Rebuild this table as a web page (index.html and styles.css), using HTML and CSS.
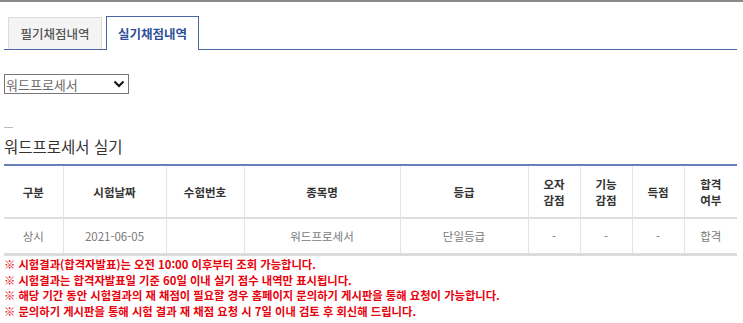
FILE: index.html
```html
<!DOCTYPE html>
<html lang="ko">

<head>
  <meta charset="UTF-8">
  <meta name="viewport" content="width=device-width, initial-scale=1.0">
  <title>채점내역 조회</title>
  <link rel="stylesheet" href="styles.css">
</head>

<body>
  <div class="wrap">
    <ul class="tabs">
      <li class="tab">필기채점내역</li>
      <li class="tab on">실기채점내역</li>
    </ul>

    <div class="select-box">
      <select class="subject">
        <option>워드프로세서</option>
      </select>
      <svg class="arrow" width="12" height="8" viewBox="0 0 12 8">
        <path d="M1.5 1.5 L6 6 L10.5 1.5" fill="none" stroke="#111" stroke-width="2"/>
      </svg>
    </div>

    <div class="dash"></div>
    <h3 class="title">워드프로세서 실기</h3>

    <table class="score">
      <colgroup>
        <col style="width:59px">
        <col style="width:103px">
        <col style="width:78px">
        <col style="width:156px">
        <col style="width:128px">
        <col style="width:52px">
        <col style="width:52px">
        <col style="width:52px">
        <col style="width:53px">
      </colgroup>
      <thead>
        <tr>
          <th>구분</th>
          <th>시험날짜</th>
          <th>수험번호</th>
          <th>종목명</th>
          <th>등급</th>
          <th>오자<br>감점</th>
          <th>기능<br>감점</th>
          <th>득점</th>
          <th>합격<br>여부</th>
        </tr>
      </thead>
      <tbody>
        <tr>
          <td>상시</td>
          <td>2021-06-05</td>
          <td></td>
          <td>워드프로세서</td>
          <td>단일등급</td>
          <td>-</td>
          <td>-</td>
          <td>-</td>
          <td>합격</td>
        </tr>
      </tbody>
    </table>

    <ul class="notice">
      <li>※ 시험결과(합격자발표)는 오전 10:00 이후부터 조회 가능합니다.</li>
      <li>※ 시험결과는 합격자발표일 기준 60일 이내 실기 점수 내역만 표시됩니다.</li>
      <li>※ 해당 기간 동안 시험결과의 재 채점이 필요할 경우 홈페이지 문의하기 게시판을 통해 요청이 가능합니다.</li>
      <li>※ 문의하기 게시판을 통해 시험 결과 재 채점 요청 시 7일 이내 검토 후 회신해 드립니다.</li>
    </ul>
  </div>
</body>

</html>
```

FILE: styles.css
```css
body {
  margin: 0;
  font-family: "Noto Sans CJK KR", "Noto Sans", sans-serif;
  background-color: #fff;
  color: #333;
}

.wrap {
  border-top: 2px solid #8a8a8a;
  padding: 0 6px 0 4px;
}

/* 탭 */
.tabs {
  display: flex;
  align-items: flex-end;
  list-style: none;
  margin: 14px 0 0;
  padding: 0;
  border-bottom: 1px solid #4a64a8;
  height: 33px;
}

.tab {
  box-sizing: border-box;
  width: 94px;
  height: 32px;
  margin-left: 4px;
  border: 1px solid #dcdcdc;
  border-bottom: none;
  background-color: #f4f4f4;
  color: #555;
  font-size: 12.5px;
  font-weight: 500;
  line-height: 31px;
  text-align: center;
}

.tab.on {
  width: 93px;
  height: 34px;
  margin-bottom: -1px;
  border: 1px solid #4a64a8;
  border-bottom: none;
  background-color: #fff;
  color: #2e4f9a;
  font-weight: 700;
  line-height: 34px;
}

/* 종목 선택 */
.select-box {
  position: relative;
  width: 125px;
  margin-top: 24px;
}

.subject {
  display: block;
  width: 125px;
  height: 20px;
  margin: 0;
  padding: 0 1px;
  border: 1px solid #777;
  border-radius: 0;
  background-color: #fff;
  color: #6a6a6a;
  font-family: inherit;
  font-size: 13px;
  appearance: none;
  -webkit-appearance: none;
}

.arrow {
  position: absolute;
  right: 4px;
  top: 6px;
  pointer-events: none;
}

.dash {
  width: 9px;
  height: 1px;
  margin-top: 33px;
  background-color: #bbb;
}

.title {
  margin: 8px 0 0;
  font-size: 15.5px;
  font-weight: 400;
  line-height: 20px;
  color: #333;
}

/* 점수 표 */
.score {
  width: 733px;
  margin-top: 8px;
  border-collapse: collapse;
  table-layout: fixed;
  border-top: 2px solid #6a80bb;
  border-bottom: 3px solid #dcdcdc;
}

.score th,
.score td {
  padding: 0;
  text-align: center;
  font-size: 11.5px;
  border-left: 1px solid #e4e4e4;
}

.score th:first-child,
.score td:first-child {
  border-left: none;
}

.score th {
  height: 51px;
  font-weight: 700;
  color: #333;
  line-height: 16px;
  border-bottom: 2px solid #dedede;
}

.score td {
  height: 34px;
  font-weight: 400;
  color: #7a7a7a;
}

/* 안내문 */
.notice {
  list-style: none;
  margin: 1px 0 0;
  padding: 0;
}

.notice li {
  color: #e8000b;
  font-size: 11.3px;
  font-weight: 700;
  line-height: 15.7px;
}
```
